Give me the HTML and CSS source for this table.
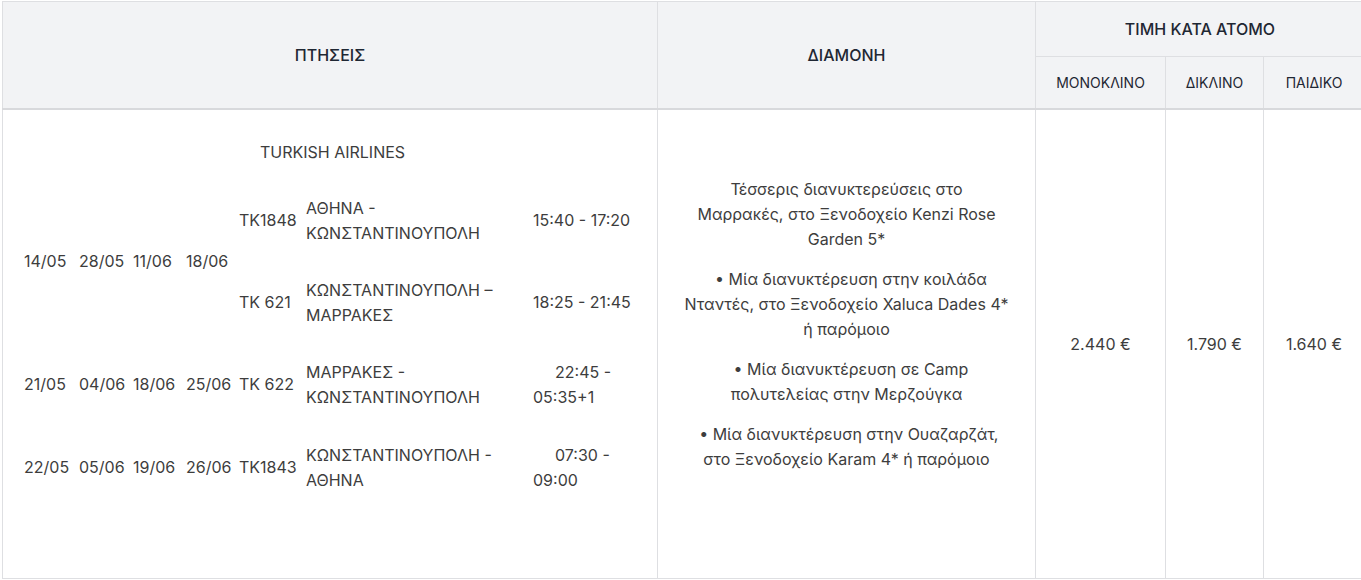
FILE: index.html
```html
<!DOCTYPE html>
<html lang="el">
<head>
<meta charset="utf-8">
<title>Πτήσεις</title>
<link rel="stylesheet" href="styles.css">
</head>
<body>
<div class="wrap">
<table class="tour">
  <colgroup>
    <col class="c-flights">
    <col class="c-stay">
    <col class="c-single">
    <col class="c-double">
    <col class="c-child">
  </colgroup>
  <thead>
    <tr class="h1">
      <th rowspan="2">ΠΤΗΣΕΙΣ</th>
      <th rowspan="2">ΔΙΑΜΟΝΗ</th>
      <th colspan="3">ΤΙΜΗ ΚΑΤΑ ΑΤΟΜΟ</th>
    </tr>
    <tr class="h2">
      <th>ΜΟΝΟΚΛΙΝΟ</th>
      <th>ΔΙΚΛΙΝΟ</th>
      <th>ΠΑΙΔΙΚΟ</th>
    </tr>
  </thead>
  <tbody>
    <tr class="body-row">
      <td class="flights">
        <div class="fgrid">
          <div class="airline">TURKISH AIRLINES</div>

          <div class="d ra">14/05</div>
          <div class="d ra">28/05</div>
          <div class="d ra">11/06</div>
          <div class="d ra">18/06</div>
          <div class="code r1">TK1848</div>
          <div class="route r1">ΑΘΗΝΑ - ΚΩΝΣΤΑΝΤΙΝΟΥΠΟΛΗ</div>
          <div class="time r1">15:40 - 17:20</div>

          <div class="code r2">TK 621</div>
          <div class="route r2">ΚΩΝΣΤΑΝΤΙΝΟΥΠΟΛΗ – ΜΑΡΡΑΚΕΣ</div>
          <div class="time r2">18:25 - 21:45</div>

          <div class="d r3">21/05</div>
          <div class="d r3">04/06</div>
          <div class="d r3">18/06</div>
          <div class="d r3">25/06</div>
          <div class="code r3">TK 622</div>
          <div class="route r3">ΜΑΡΡΑΚΕΣ - ΚΩΝΣΤΑΝΤΙΝΟΥΠΟΛΗ</div>
          <div class="time r3 indent">22:45 - 05:35+1</div>

          <div class="d r4">22/05</div>
          <div class="d r4">05/06</div>
          <div class="d r4">19/06</div>
          <div class="d r4">26/06</div>
          <div class="code r4">TK1843</div>
          <div class="route r4">ΚΩΝΣΤΑΝΤΙΝΟΥΠΟΛΗ - ΑΘΗΝΑ</div>
          <div class="time r4 indent">07:30 - 09:00</div>
        </div>
      </td>
      <td class="stay">
        <p>Τέσσερις διανυκτερεύσεις στο<br>Μαρρακές, στο Ξενοδοχείο Kenzi Rose<br>Garden 5*</p>
        <p>&nbsp; • Μία διανυκτέρευση στην κοιλάδα<br>Νταντές, στο Ξενοδοχείο Xaluca Dades 4*<br>ή παρόμοιο</p>
        <p>&nbsp; • Μία διανυκτέρευση σε Camp<br>πολυτελείας στην Μερζούγκα</p>
        <p>&nbsp;• Μία διανυκτέρευση στην Ουαζαρζάτ,<br>στο Ξενοδοχείο Karam 4* ή παρόμοιο</p>
      </td>
      <td class="price">2.440 €</td>
      <td class="price">1.790 €</td>
      <td class="price">1.640 €</td>
    </tr>
  </tbody>
</table>
</div>
</body>
</html>
```

FILE: styles.css
```css
html, body {
  margin: 0;
  padding: 0;
  background: #ffffff;
}
body {
  font-family: Inter, "Noto Sans", "Liberation Sans", sans-serif;
  color: #3d3d3d;
  font-size: 16px;
  overflow: hidden;
}
.wrap {
  padding: 1px 0 0 2px;
}
.tour {
  border-collapse: collapse;
  table-layout: fixed;
  width: 1362px;
}
.c-flights { width: 655px; }
.c-stay { width: 378px; }
.c-single { width: 130px; }
.c-double { width: 98px; }
.c-child { width: 101px; }

.tour th,
.tour td {
  border: 1px solid #dedfe2;
  padding: 0;
}
.tour thead th {
  background: #f2f3f5;
  color: #1f2733;
  font-weight: 500;
  font-size: 16px;
  text-align: center;
  vertical-align: middle;
}
.tour thead tr.h1 { height: 55px; }
.tour thead tr.h2 { height: 52px; }
.tour thead tr.h2 th { font-weight: 400; font-size: 14px; }
.tour thead { border-bottom: 2px solid #d8d9dc; }

.body-row { height: 470px; }

.flights {
  vertical-align: top;
  padding: 30px 0 0 21px !important;
}
.fgrid {
  display: grid;
  grid-template-columns: 55px 54px 53px 53px 67px 227px 106px;
  grid-template-rows: 25px 15px 82px 82px 82px 84px;
  line-height: 25px;
}
.airline {
  grid-column: 1 / -1;
  grid-row: 1;
  text-align: center;
  padding-left: 2px;
}
.d, .code, .route, .time { align-self: center; }
.d, .code { white-space: nowrap; }
.ra { grid-row: 3 / span 2; }
.r1 { grid-row: 3; }
.r2 { grid-row: 4; }
.r3 { grid-row: 5; }
.r4 { grid-row: 6; }
.code { grid-column: 5; }
.route { grid-column: 6; }
.time { grid-column: 7; }
.time.indent { text-indent: 22px; }

.stay {
  vertical-align: top;
  text-align: center;
  padding: 67px 10px 0 10px !important;
  line-height: 25px;
  white-space: nowrap;
}
.stay p {
  margin: 0 0 15px 0;
}
.price {
  text-align: center;
  vertical-align: middle;
}
```
